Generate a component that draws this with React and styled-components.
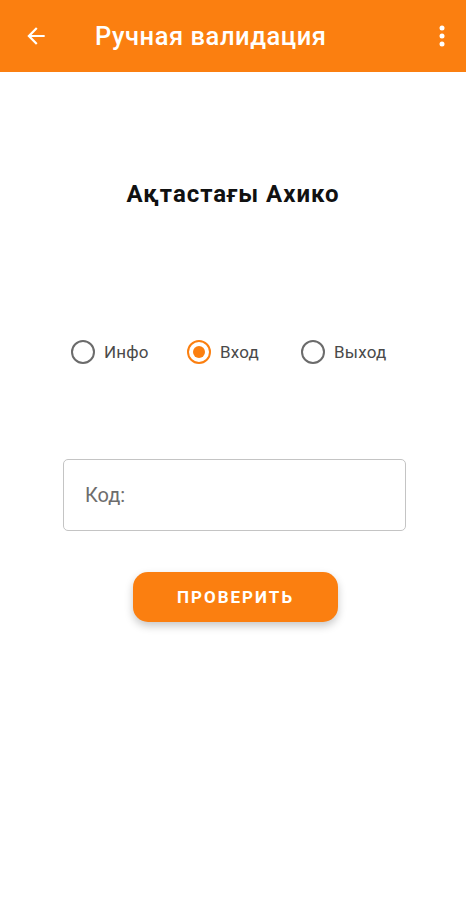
import styled, { createGlobalStyle } from "styled-components";

const Global = createGlobalStyle`
  body {
    margin: 0;
    background: #fff;
    font-family: Roboto, "Noto Sans", sans-serif;
  }
`;

const Page = styled.div`
  width: 466px;
  min-height: 900px;
  display: flex;
  flex-direction: column;
  background: #fff;
`;

const Toolbar = styled.div`
  height: 72px;
  background: #fb7f10;
  display: flex;
  align-items: center;
  padding: 0 14px 0 22px;
  color: #fff;
`;

const IconBtn = styled.div`
  display: flex;
  align-items: center;
  justify-content: center;
  width: ${(p) => p.w || 28}px;
  height: 28px;
`;

const Title = styled.h1`
  flex: 1;
  margin: 0 0 0 45px;
  font-size: 25.5px;
  font-weight: 500;
  letter-spacing: 0.55px;
`;

const Content = styled.div`
  display: flex;
  flex-direction: column;
  align-items: flex-start;
  padding-left: 63px;
`;

const Name = styled.div`
  margin-top: 108px;
  align-self: center;
  margin-right: 63px;
  font-size: 24px;
  font-weight: 700;
  color: #111;
  letter-spacing: 1px;
`;

const RadioGroup = styled.div`
  margin-top: 132px;
  display: flex;
  padding-left: 8px;
`;

const RadioItem = styled.label`
  display: flex;
  align-items: center;
  gap: 9px;
  width: ${(p) => p.w}px;
  font-size: 17px;
  color: #4a4a4a;
  letter-spacing: 0.2px;
`;

const Circle = styled.span`
  width: 20px;
  height: 20px;
  border-radius: 50%;
  border: 2px solid ${(p) => (p.on ? "#fb7f10" : "#6b6b6b")};
  display: flex;
  align-items: center;
  justify-content: center;
  &::after {
    content: "";
    width: 12px;
    height: 12px;
    border-radius: 50%;
    background: ${(p) => (p.on ? "#fb7f10" : "transparent")};
  }
`;

const Field = styled.div`
  margin-top: 95px;
  width: 343px;
  height: 72px;
  box-sizing: border-box;
  border: 1.5px solid #c4c4c4;
  border-radius: 5px;
  display: flex;
  align-items: center;
  padding-left: 21px;
  font-size: 20px;
  color: #6d6d6d;
`;

const Button = styled.button`
  margin: 41px 0 0 70px;
  width: 205px;
  height: 50px;
  border: none;
  border-radius: 15px;
  background: #fb7f10;
  color: #fff;
  font-family: Roboto, sans-serif;
  font-size: 17px;
  font-weight: 700;
  letter-spacing: 2px;
  box-shadow: 0 4px 8px rgba(0, 0, 0, 0.22);
`;

const App = () => {
  return (
    <Page>
      <Global />
      <Toolbar>
        <IconBtn>
          <svg width="26" height="26" viewBox="0 0 24 24">
            <path
              d="M20 11H7.83l5.59-5.59L12 4l-8 8 8 8 1.41-1.41L7.83 13H20v-2z"
              fill="#fff"
            />
          </svg>
        </IconBtn>
        <Title>Ручная валидация</Title>
        <IconBtn w={20}>
          <svg width="6" height="24" viewBox="0 0 6 24">
            <circle cx="3" cy="4" r="2.5" fill="#fff" />
            <circle cx="3" cy="12" r="2.5" fill="#fff" />
            <circle cx="3" cy="20" r="2.5" fill="#fff" />
          </svg>
        </IconBtn>
      </Toolbar>
      <Content>
        <Name>Ақтастағы Ахико</Name>
        <RadioGroup>
          <RadioItem w={116}>
            <Circle />
            Инфо
          </RadioItem>
          <RadioItem w={114}>
            <Circle on />
            Вход
          </RadioItem>
          <RadioItem w={100}>
            <Circle />
            Выход
          </RadioItem>
        </RadioGroup>
        <Field>Код:</Field>
        <Button>ПРОВЕРИТЬ</Button>
      </Content>
    </Page>
  );
};

export default App;
